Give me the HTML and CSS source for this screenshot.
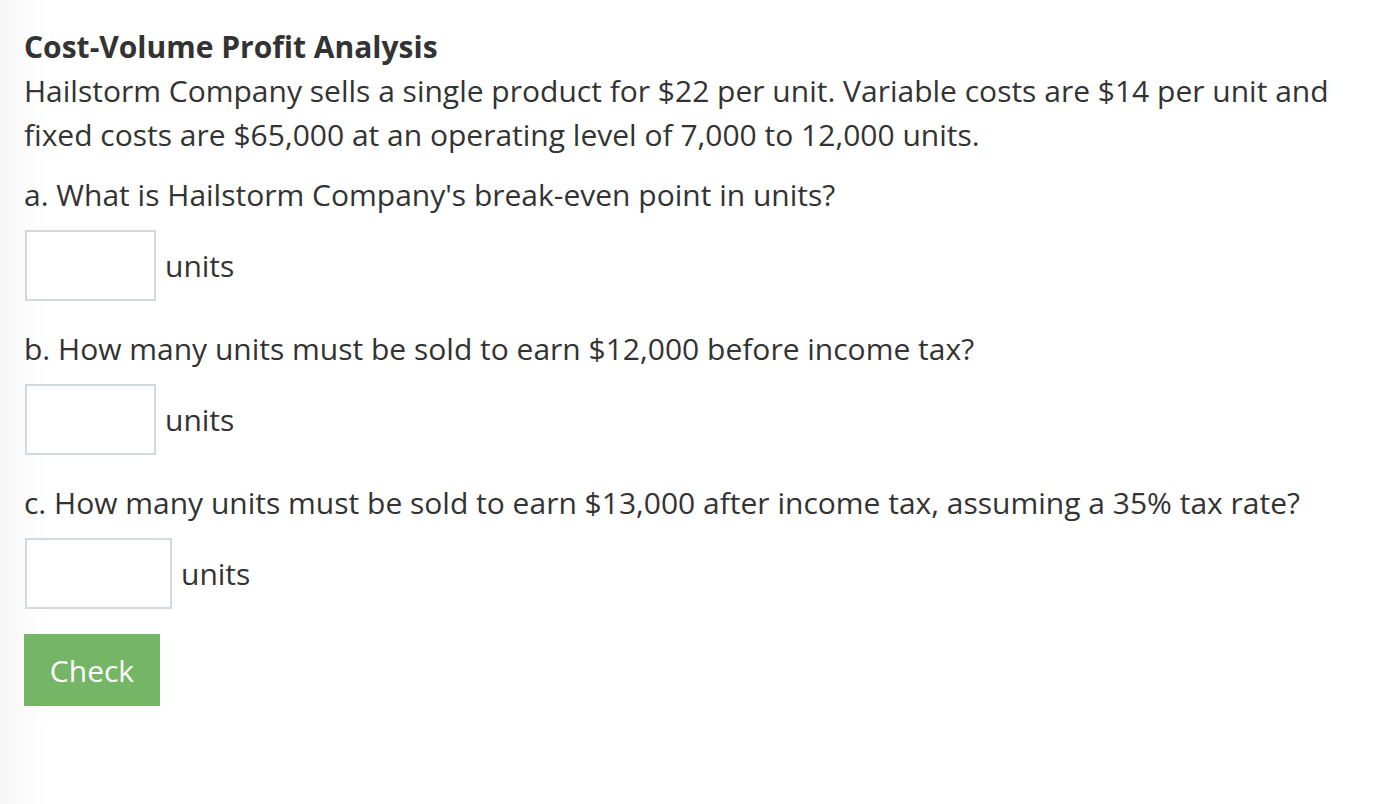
FILE: index.html
```html
<!DOCTYPE html>
<html>
<head>
<meta charset="utf-8">
<link rel="stylesheet" href="styles.css">
</head>
<body>
<div class="page">
  <h1 class="title">Cost-Volume Profit Analysis</h1>
  <p class="intro">Hailstorm Company sells a single product for $22 per unit. Variable costs are $14 per unit and fixed costs are $65,000 at an operating level of 7,000 to 12,000 units.</p>
  <div class="question">
    <p class="q-text">a. What is Hailstorm Company's break-even point in units?</p>
    <div class="answer"><input class="box" type="text"><span class="unit">units</span></div>
  </div>
  <div class="question">
    <p class="q-text">b. How many units must be sold to earn $12,000 before income tax?</p>
    <div class="answer"><input class="box" type="text"><span class="unit">units</span></div>
  </div>
  <div class="question">
    <p class="q-text">c. How many units must be sold to earn $13,000 after income tax, assuming a 35% tax rate?</p>
    <div class="answer"><input class="box wide" type="text"><span class="unit">units</span></div>
  </div>
  <button class="check">Check</button>
</div>
</body>
</html>
```
FILE: styles.css
```css
html, body {
  margin: 0;
  padding: 0;
  height: 100%;
}
body {
  background: linear-gradient(to right, #f6f6f6 0px, #fcfcfc 30px, #ffffff 48px);
  font-family: "Open Sans", "Liberation Sans", sans-serif;
  color: #333333;
}
.page {
  padding: 25px 24px 0 24px;
}
.title {
  margin: 0;
  font-size: 30px;
  font-weight: 700;
  line-height: 44px;
}
.intro {
  margin: 0;
  font-size: 30px;
  line-height: 44px;
}
.question {
  display: flex;
  flex-direction: column;
}
.q-text {
  margin: 18px 0 0 0;
  font-size: 30px;
  line-height: 40px;
}
.answer {
  display: flex;
  align-items: center;
  gap: 9px;
  margin-top: 15px;
  margin-bottom: 10px;
}
.box {
  box-sizing: border-box;
  width: 131px;
  height: 71px;
  margin: 0 0 0 1px;
  border: 2px solid #d3d8dc;
  background: #ffffff;
  padding: 0;
  border-radius: 0;
}
.box.wide {
  width: 147px;
}
.unit {
  font-size: 30px;
  line-height: 40px;
}
.check {
  margin-top: 15px;
  width: 136px;
  height: 72px;
  border: none;
  background: #74b566;
  color: #ffffff;
  font-family: "Open Sans", "Liberation Sans", sans-serif;
  font-size: 30px;
  padding: 0;
}
```
